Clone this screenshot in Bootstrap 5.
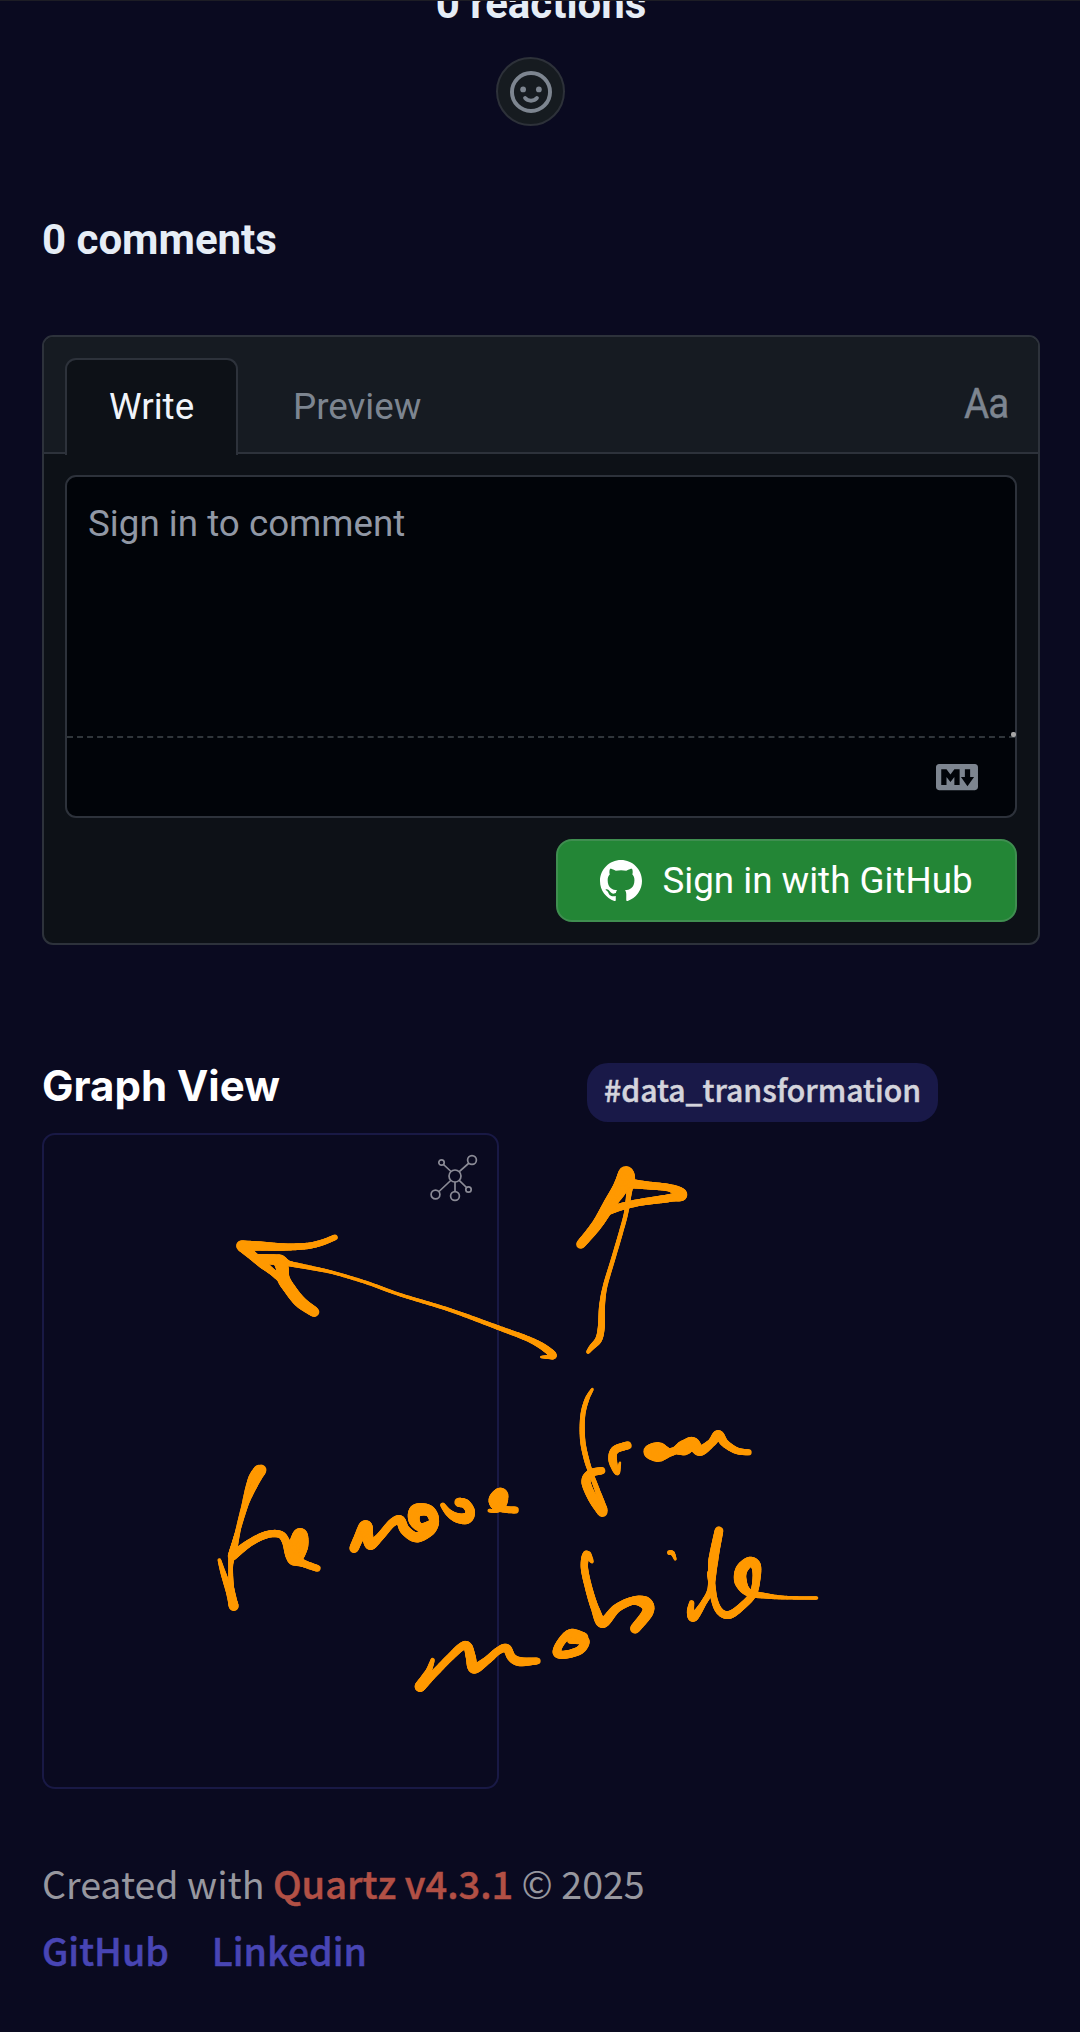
<!DOCTYPE html>
<html lang="en">
<head>
<meta charset="utf-8">
<meta name="viewport" content="width=device-width, initial-scale=1">
<title>Comments and graph view</title>
<link rel="stylesheet" href="https://cdn.jsdelivr.net/npm/bootstrap@5.3.0/dist/css/bootstrap.min.css">
<style>
  body { background: #0a0a20; width: 1080px; height: 2032px; overflow: hidden; font-family: Roboto, sans-serif; font-size: 36.75px; line-height: 52px; color: #e6edf3; border-top: 1px solid #1d1d25; }
  .page { padding: 0 40px 0 42px; }
  .count-title { font-size: 42px; line-height: 48px; font-weight: 700; color: #e6edf6; margin: 0; }
  .reactions { margin-top: -21px; }
  .react-btn { width: 69px; height: 69px; margin: 29px 21px 0 0; background: #161b20; border: 2px solid #2d3139; color: #7d8590; padding: 0; }
  .comments-title { margin-top: 90px; }
  .comment-box { margin-top: 71px; border: 2px solid #2d323b; border-radius: 11px; background: #0d1117; height: 610px; }
  .box-head { height: 117px; background: #161b22; border-bottom: 2px solid #2d323b; border-radius: 9px 9px 0 0; padding: 21px 30px 0 21px; }
  .tab-btn { height: 97px; padding: 21px 43px 0; border: 2px solid transparent; color: #7d8590; white-space: nowrap; }
  .tab-btn.on { width: 173px; padding-left: 42px; background: #0d1117; border-color: #2d323b; border-bottom: 0; border-radius: 11px 11px 0 0; color: #f0f4fa; }
  .tab-btn.next { margin-left: 10px; }
  .aa { color: #7d8590; font-size: 42px; line-height: 48px; margin-top: 22px; letter-spacing: -1px; width: 44px; transform: scaleX(.92); transform-origin: left; -webkit-text-stroke: .4px currentColor; }
  .box-body { padding: 21px; }
  .editor { height: 343px; border: 2px solid #2d323b; border-radius: 11px; background: #010409; }
  .entry { position: relative; height: 261px; border-bottom: 2px dashed #30363b; padding: 21px; color: #9198a5; }
  .grip { position: absolute; right: -1px; bottom: -1px; width: 5px; height: 5px; border-radius: 2px; background: #a6a6a6; }
  .entry-foot { height: 78px; padding-right: 37px; color: #7d8590; }
  .sign-btn { width: 461px; height: 83px; margin-top: 21px; background: #238636; border: 2px solid #3f8e50; border-radius: 16px; color: #fff; padding: 0; gap: 20px; font-size: 36.75px; line-height: 52px; }
  .lower { margin-top: 113px; }
  .graph-col { width: 457px; margin-right: 88px; }
  .graph-title { font-family: Inter, sans-serif; font-size: 42px; line-height: 56px; font-weight: 700; color: #fff; margin: 0; white-space: nowrap; }
  .graph-box { margin-top: 19px; height: 656px; border: 2px solid #191945; border-radius: 13px; padding: 19px 19px 0 0; color: #8b8b96; }
  .tag { margin-top: 5px; height: 59px; width: 351px; border-radius: 21px; background: #191948; color: #d4d4dc; font: 500 30.2px/53px "Noto Sans CJK SC", sans-serif; -webkit-text-stroke: .5px currentColor; white-space: nowrap; }
  .foot { font-family: "Noto Sans CJK SC", sans-serif; font-size: 37.6px; line-height: 67px; color: #97979f; margin-top: 60px; white-space: nowrap; }
  .foot .flink { font-weight: 500; text-decoration: none; color: #4845b4; -webkit-text-stroke: .5px currentColor; }
  .foot .quartz { color: #b25045; font-size: 38px; }
  .foot-links { gap: 43px; }
  .ink { position: absolute; left: 0; top: 0; pointer-events: none; }
</style>
<script src="https://cdn.jsdelivr.net/npm/bootstrap@5.3.0/dist/js/bootstrap.bundle.min.js"></script>
</head>
<body class="position-relative">
<main class="page">
  <section class="d-flex flex-column align-items-center">
    <h2 class="count-title reactions">0 reactions</h2>
    <button class="react-btn rounded-circle d-flex align-items-center justify-content-center" aria-label="Add reaction">
      <svg width="42" height="42" viewBox="0 0 16 16" fill="none" stroke="currentColor" stroke-width="1.5" stroke-linecap="round"><circle cx="8" cy="8" r="7.25"/><path d="M5.75 10.3Q6.6 11.3 8 11.3T10.25 10.3"/><g fill="currentColor" stroke="none"><circle cx="5" cy="7" r="1.1"/><circle cx="11" cy="7" r="1.1"/></g></svg>
    </button>
  </section>

  <h2 class="count-title comments-title">0 comments</h2>

  <section class="comment-box">
    <div class="box-head d-flex">
      <div class="tab-btn on">Write</div>
      <div class="tab-btn next">Preview</div>
      <div class="aa ms-auto">Aa</div>
    </div>
    <div class="box-body">
      <div class="editor">
        <div class="entry">Sign in to comment<span class="grip"></span></div>
        <div class="entry-foot d-flex align-items-center justify-content-end">
          <svg width="42" height="42" viewBox="0 0 16 16" fill="currentColor"><path d="M14.85 3c.63 0 1.15.52 1.14 1.15v7.7c0 .63-.51 1.15-1.15 1.15H1.15C.52 13 0 12.48 0 11.84V4.15C0 3.52.52 3 1.15 3ZM9 11V5H7L5.5 7 4 5H2v6h2V8l1.5 1.92L7 8v3Zm2.99.5L14.5 8H13V5h-2v3H9.5Z"/></svg>
        </div>
      </div>
      <button class="sign-btn btn d-flex align-items-center justify-content-center ms-auto">
        <svg width="42" height="42" viewBox="0 0 16 16" fill="currentColor"><path d="M8 0C3.58 0 0 3.58 0 8c0 3.54 2.29 6.53 5.47 7.59.4.07.55-.17.55-.38 0-.19-.01-.82-.01-1.49-2.01.37-2.53-.49-2.69-.94-.09-.23-.48-.94-.82-1.13-.28-.15-.68-.52-.01-.53.63-.01 1.08.58 1.23.82.72 1.21 1.87.87 2.33.66.07-.52.28-.87.51-1.07-1.78-.2-3.64-.89-3.64-3.95 0-.87.31-1.59.82-2.15-.08-.2-.36-1.02.08-2.12 0 0 .67-.21 2.2.82.64-.18 1.32-.27 2-.27s1.36.09 2 .27c1.53-1.04 2.2-.82 2.2-.82.44 1.1.16 1.92.08 2.12.51.56.82 1.27.82 2.15 0 3.07-1.87 3.75-3.65 3.95.29.25.54.73.54 1.48 0 1.07-.01 1.93-.01 2.2 0 .21.15.46.55.38A8.01 8.01 0 0 0 16 8c0-4.42-3.58-8-8-8Z"/></svg>
        <span>Sign in with GitHub</span>
      </button>
    </div>
  </section>

  <section class="lower d-flex align-items-start">
    <div class="graph-col">
      <h3 class="graph-title">Graph View</h3>
      <div class="graph-box d-flex justify-content-end">
        <svg width="48" height="48" viewBox="0 0 48 48" fill="none" stroke="currentColor" stroke-width="1.7"><circle cx="25" cy="22" r="6"/><circle cx="42" cy="6" r="4.4"/><circle cx="11.5" cy="8.5" r="2.7"/><circle cx="5.5" cy="40.5" r="4.4"/><circle cx="25" cy="42" r="4.4"/><circle cx="38.5" cy="35.5" r="2.7"/><path d="M29.3 17.7 39 9M21 17.5l-7.5-7M20.7 26.5 9 37.5M25 28v9.6M29.2 26.3l7.3 7.2"/></svg>
      </div>
    </div>
    <div class="tag text-center">#data_transformation</div>
  </section>

  <footer class="foot">
    <div>Created with <a class="flink quartz" href="#">Quartz v4.3.1</a> © 2025</div>
    <div class="foot-links d-flex"><a class="flink" href="#">GitHub</a><a class="flink" href="#">Linkedin</a></div>
  </footer>
</main>
<canvas class="ink" id="ink" width="1080" height="2031"></canvas>
<script>
  // Pen strokes: each point is x, y, pen width in thirds of a pixel from the group's origin.
  const groups = [
    { o: [560, 1040], s: [
      [84,936,10, 95,922,16, 116,898,21, 124,860,21, 126,800,18, 135,740,14, 160,655,13, 182,580,13, 198,520,13, 207,460,16, 212,420,22, 200,402,44],
      [198,402,48, 178,445,42, 150,490,38, 110,555,32, 62,613,27],
      [200,410,46, 186,450,30, 163,488,18],
      [205,430,30, 260,436,24, 330,444,22, 364,464,36, 330,474,24, 240,487,21, 180,501,22, 145,512,26]
    ]},
    { o: [200, 1200], s: [
      [1024,471,7, 1055,470,15, 1056,462,23, 1025,438,20, 980,415,16, 900,385,14, 750,330,11, 600,284,10, 500,248,10, 400,218,10, 330,203,13, 265,190,16, 237,180,32, 175,177,30],
      [238,182,38, 247,205,38, 250,235,38, 268,265,36, 300,305,36, 343,336,30],
      [250,242,24, 215,214,20, 185,190,26, 150,160,28, 125,138,33],
      [125,137,32, 180,138,28, 250,141,22, 320,138,19, 365,128,18, 405,112,17]
    ]},
    { o: [200, 1440], s: [
      [58,360,10, 70,400,16, 90,460,22, 101,498,30],
      [101,498,30, 94,440,16, 92,380,14, 97,340,20, 110,280,12, 128,200,9, 150,120,14, 176,88,28],
      [183,90,34, 165,130,22, 140,190,14, 115,270,14, 97,345,26],
      [97,348,28, 150,308,22, 200,284,22, 240,283,22, 258,305,24, 270,345,28, 286,358,36, 305,320,38, 300,286,44, 282,330,40, 285,355,40, 310,370,22, 352,385,20],
      [462,325,28, 478,290,30, 497,260,40, 503,290,34, 512,315,30, 540,290,24, 575,250,24, 600,240,28, 615,270,30, 650,292,30, 690,268,36, 702,238,30, 685,211,34, 648,212,40, 642,240,34, 660,262,24, 692,254,26],
      [728,195,14, 745,217,20, 770,233,28, 800,235,34, 811,215,28, 797,192,28, 777,187,28],
      [868,212,11, 890,211,12, 905,190,30, 902,165,44, 886,180,42, 890,198,28, 915,208,20, 946,210,21],
      [698,660,12, 685,695,18, 660,740,32, 700,703,22, 745,657,22, 785,620,24, 803,619,26, 812,650,30, 822,685,32, 860,662,24, 895,632,22, 920,625,26, 935,652,26, 960,665,28, 1012,663,20]
    ]},
    { o: [400, 1360], s: [
      [577,88,8, 560,120,14, 548,170,15, 548,240,16, 560,300,16, 575,345,14, 595,400,16, 608,450,30],
      [607,455,32, 578,415,28, 558,365,28, 572,340,24, 605,332,22],
      [660,308,6, 652,338,14, 638,300,26, 645,270,24, 683,256,24],
      [752,275,40, 775,276,60, 805,278,26, 830,270,22, 855,262,46, 878,250,38, 900,272,32, 935,248,24, 955,225,30, 975,250,24, 1010,272,20, 1046,277,18],
      [576,605,8, 560,584,24, 553,620,22, 565,680,22, 585,745,24, 608,788,32, 650,745,26, 700,722,24, 738,730,38, 743,757,34, 705,806,30],
      [808,578,14, 818,580,14, 826,598,8],
      [875,728,14, 872,755,22, 881,771,28, 910,730,18, 932,685,18, 940,600,30, 957,512,26],
      [932,640,22, 942,715,20, 960,755,22, 990,764,24, 1030,735,22, 1060,700,22, 1070,650,24, 1067,615,30, 1048,606,30, 1024,630,36, 1022,665,38, 1045,697,24, 1100,708,16, 1160,713,11, 1250,714,10],
      [510,842,16, 553,842,30, 540,870,26, 495,884,24, 471,878,26, 482,848,24, 512,820,26, 550,832,30]
    ]}
  ];
  const ctx = document.getElementById('ink').getContext('2d');
  ctx.strokeStyle = '#ff9900';
  ctx.lineCap = 'round';
  const spline = (a, b, c, d, t) => 0.5 * (2*b + (c-a)*t + (2*a-5*b+4*c-d)*t*t + (3*b-a-3*c+d)*t*t*t);
  for (const g of groups) for (const s of g.s) {
    const p = [];
    for (let i = 0; i < s.length; i += 3) p.push([g.o[0] + s[i]/3, g.o[1] - 1 + s[i+1]/3, s[i+2]/3]);
    for (let i = 0; i < p.length - 1; i++) {
      const a = p[Math.max(0, i-1)], b = p[i], c = p[i+1], d = p[Math.min(p.length-1, i+2)];
      const n = Math.max(6, Math.ceil(Math.hypot(c[0]-b[0], c[1]-b[1]) / 1.5));
      let x = b[0], y = b[1];
      for (let k = 1; k <= n; k++) {
        const t = k / n, nx = spline(a[0],b[0],c[0],d[0],t), ny = spline(a[1],b[1],c[1],d[1],t);
        ctx.lineWidth = b[2] + (c[2]-b[2]) * t;
        ctx.beginPath(); ctx.moveTo(x, y); ctx.lineTo(nx, ny); ctx.stroke();
        x = nx; y = ny;
      }
    }
  }
</script>
</body>
</html>
